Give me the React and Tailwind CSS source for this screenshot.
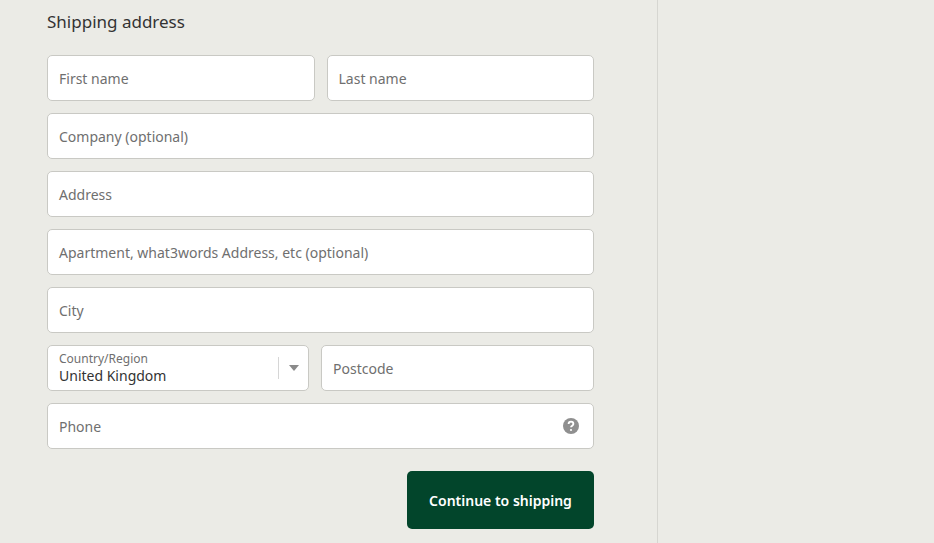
export default function App() {
  const F = "font-['Inter',sans-serif]";
  const inp = "h-[46px] bg-white border border-[#c9c9c4] rounded-[5px] flex items-center px-[11px] text-[14px] text-[#6f6f6f]";
  return (
    <div className={`w-[934px] h-[543px] bg-[#ebebe6] flex ${F} overflow-hidden`}>
      <div className="w-[658px] border-r border-[#d6d6d1] pl-[47px] pr-[63px]">
        <div className="text-[17px] text-[#333] mt-[11px] h-[22px] leading-[22px]">Shipping address</div>
        <div className="mt-[22px] flex flex-col gap-[12px]">
          <div className="flex gap-[12px]">
            <div className={`${inp} flex-1`}>First name</div>
            <div className={`${inp} flex-1`}>Last name</div>
          </div>
          <div className={inp}>Company (optional)</div>
          <div className={inp}>Address</div>
          <div className={inp}>Apartment, what3words Address, etc (optional)</div>
          <div className={inp}>City</div>
          <div className="flex gap-[12px]">
            <div className={`${inp} flex-1 pr-0`}>
              <div className="flex-1 flex flex-col leading-none">
                <span className="text-[12px] text-[#6f6f6f]">Country/Region</span>
                <span className="text-[14px] text-[#333] mt-[4px]">United Kingdom</span>
              </div>
              <div className="w-px h-[22px] bg-[#d6d6d6]"></div>
              <div className="w-[29px] flex justify-center">
                <svg width="10" height="6" viewBox="0 0 10 6"><path d="M0 0h10L5 6z" fill="#8a8a8a"/></svg>
              </div>
            </div>
            <div className={`${inp} flex-1`}>Postcode</div>
          </div>
          <div className={`${inp} justify-between`}>
            <span>Phone</span>
            <svg width="16" height="16" viewBox="0 0 16 16" className="mr-[3px]">
              <circle cx="8" cy="8" r="8" fill="#8f8f8f"/>
              <path d="M5.6 6.1a2.4 2.4 0 0 1 4.8 0c0 1.6-2.4 1.6-2.4 3.2" stroke="#fff" strokeWidth="1.8" fill="none"/>
              <circle cx="8" cy="12" r="1.1" fill="#fff"/>
            </svg>
          </div>
        </div>
        <div className="flex justify-end mt-[22px]">
          <button className="w-[187px] h-[58px] rounded-[5px] bg-[#02452b] text-white text-[14px] font-semibold">Continue to shipping</button>
        </div>
      </div>
      <div className="flex-1"></div>
    </div>
  );
}
